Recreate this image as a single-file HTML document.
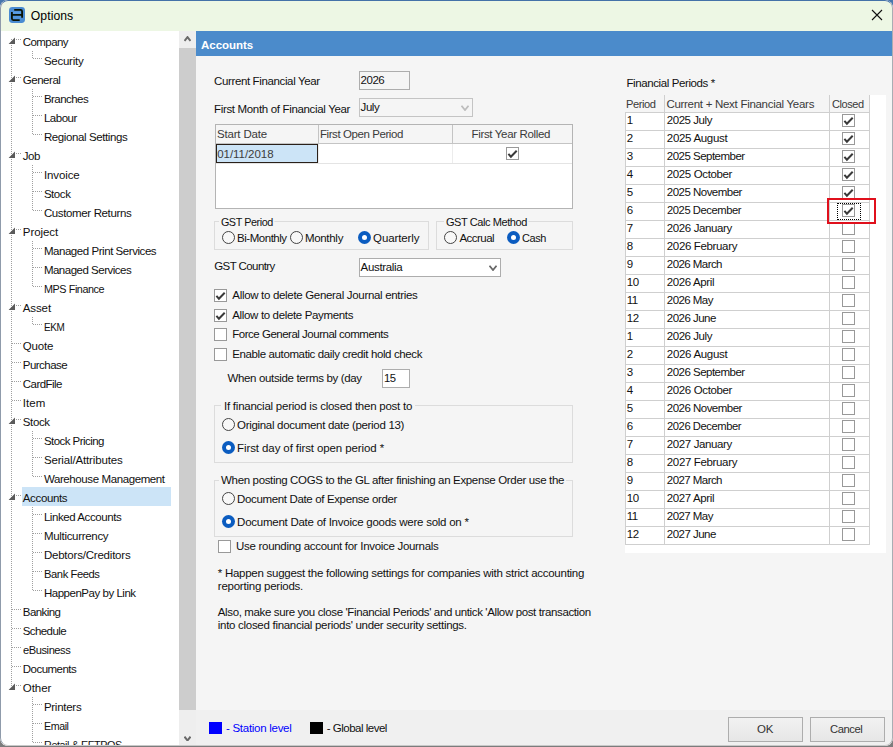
<!DOCTYPE html>
<html lang="en"><head><meta charset="utf-8"><title>Options</title>
<style>
html,body{margin:0;padding:0}
body{width:893px;height:747px;overflow:hidden;background:#7c7c7c;position:relative;font-family:"Liberation Sans", sans-serif;font-size:11.5px;color:#111}
.abs{position:absolute}
#win{position:absolute;left:0;top:0;width:893px;height:746px;border-radius:8px;overflow:hidden;background:#f5f5f5;}
#win:after{content:'';position:absolute;left:0;top:0;right:0;bottom:0;border-radius:8px;border:1px solid;border-color:#4472a8 #a9adb3 #c8c8c8 #8f9bab;pointer-events:none}
#corner{position:absolute;left:0;top:0;width:893px;height:20px;background:#4676ad}
#title{position:absolute;left:1px;top:1px;width:891px;height:30px;background:#edf7e4;border-radius:7px 7px 0 0}
#treebg{position:absolute;left:1px;top:31px;width:178px;height:714px;background:#fff}
#sb{position:absolute;left:179px;top:31px;width:17px;height:714px;background:#eee}
#thumb{position:absolute;left:0;top:17px;width:17px;height:662px;background:#cdcdcd}
#hdr{position:absolute;left:196px;top:31px;width:696px;height:25px;background:#4b8bcb}
#botbar{position:absolute;left:196px;top:710px;width:696px;height:35px;background:#f0f0f0}
.t{position:absolute;white-space:pre;line-height:14px;height:14px}
.vd{position:absolute;width:1px;background:repeating-linear-gradient(to bottom,#a0a0a0 0 1px,transparent 1px 2px)}
.hd{position:absolute;height:1px;background:repeating-linear-gradient(to right,#a0a0a0 0 1px,transparent 1px 2px)}
  .cb{position:absolute;width:11px;height:11px;border:1px solid #999;background:#fff}
.btn{position:absolute;width:73px;height:23px;border:1px solid #adadad;background:linear-gradient(#f2f2f2,#e6e6e6)}
</style></head><body>
<div id="corner"></div>
<div id="win">
<div id="title"></div>
<svg class="abs" style="left:9px;top:7px" width="16" height="16" viewBox="0 0 16 16"><rect width="16" height="16" rx="3.4" fill="#4a8cd2"/><rect x="4" y="4.6" width="8" height="2.2" fill="#5a9de2"/><rect x="4" y="9" width="8" height="2.8" fill="#5296dc"/><path d="M5.2 2.9H11.6Q13.1 2.9 13.1 4.4V10.7M2.9 7.9H12.6M2.9 5.1V11.6Q2.9 13.1 4.4 13.1H10.7" fill="none" stroke="#0a1405" stroke-width="1.8"/></svg><svg class="abs" style="left:871px;top:9px" width="12" height="12" viewBox="0 0 12 12"><path d="M1 1L11 11M11 1L1 11" stroke="#111" stroke-width="1.1" fill="none"/></svg>
<div id="treebg"></div>
<div id="sb"><div id="thumb"></div></div>
<div id="hdr"></div>
<div id="botbar"></div>
<div style="position:absolute;left:22px;top:487px;width:149px;height:19px;background:#cce4f7"></div><div class="vd" style="left:11px;top:39px;height:647px"></div><div class="hd" style="left:16px;top:39px;width:6px"></div><svg class="abs" style="left:8px;top:37px" width="8" height="8" viewBox="0 0 8 8"><path d="M7 0.6V7H0.6Z" fill="#5a5a5a"/></svg><div class="vd" style="left:32px;top:51px;height:8px"></div><div class="hd" style="left:33px;top:58px;width:9px"></div><div class="hd" style="left:16px;top:77px;width:6px"></div><svg class="abs" style="left:8px;top:75px" width="8" height="8" viewBox="0 0 8 8"><path d="M7 0.6V7H0.6Z" fill="#5a5a5a"/></svg><div class="vd" style="left:32px;top:89px;height:46px"></div><div class="hd" style="left:33px;top:96px;width:9px"></div><div class="hd" style="left:33px;top:115px;width:9px"></div><div class="hd" style="left:33px;top:134px;width:9px"></div><div class="hd" style="left:16px;top:153px;width:6px"></div><svg class="abs" style="left:8px;top:151px" width="8" height="8" viewBox="0 0 8 8"><path d="M7 0.6V7H0.6Z" fill="#5a5a5a"/></svg><div class="vd" style="left:32px;top:165px;height:46px"></div><div class="hd" style="left:33px;top:172px;width:9px"></div><div class="hd" style="left:33px;top:191px;width:9px"></div><div class="hd" style="left:33px;top:210px;width:9px"></div><div class="hd" style="left:16px;top:229px;width:6px"></div><svg class="abs" style="left:8px;top:227px" width="8" height="8" viewBox="0 0 8 8"><path d="M7 0.6V7H0.6Z" fill="#5a5a5a"/></svg><div class="vd" style="left:32px;top:241px;height:46px"></div><div class="hd" style="left:33px;top:248px;width:9px"></div><div class="hd" style="left:33px;top:267px;width:9px"></div><div class="hd" style="left:33px;top:286px;width:9px"></div><div class="hd" style="left:16px;top:305px;width:6px"></div><svg class="abs" style="left:8px;top:303px" width="8" height="8" viewBox="0 0 8 8"><path d="M7 0.6V7H0.6Z" fill="#5a5a5a"/></svg><div class="vd" style="left:32px;top:317px;height:8px"></div><div class="hd" style="left:33px;top:324px;width:9px"></div><div class="hd" style="left:12px;top:343px;width:10px"></div><div class="hd" style="left:12px;top:362px;width:10px"></div><div class="hd" style="left:12px;top:381px;width:10px"></div><div class="hd" style="left:12px;top:400px;width:10px"></div><div class="hd" style="left:16px;top:419px;width:6px"></div><svg class="abs" style="left:8px;top:417px" width="8" height="8" viewBox="0 0 8 8"><path d="M7 0.6V7H0.6Z" fill="#5a5a5a"/></svg><div class="vd" style="left:32px;top:431px;height:46px"></div><div class="hd" style="left:33px;top:438px;width:9px"></div><div class="hd" style="left:33px;top:457px;width:9px"></div><div class="hd" style="left:33px;top:476px;width:9px"></div><div class="hd" style="left:16px;top:495px;width:6px"></div><svg class="abs" style="left:8px;top:493px" width="8" height="8" viewBox="0 0 8 8"><path d="M7 0.6V7H0.6Z" fill="#5a5a5a"/></svg><div class="vd" style="left:32px;top:507px;height:84px"></div><div class="hd" style="left:33px;top:514px;width:9px"></div><div class="hd" style="left:33px;top:533px;width:9px"></div><div class="hd" style="left:33px;top:552px;width:9px"></div><div class="hd" style="left:33px;top:571px;width:9px"></div><div class="hd" style="left:33px;top:590px;width:9px"></div><div class="hd" style="left:12px;top:609px;width:10px"></div><div class="hd" style="left:12px;top:628px;width:10px"></div><div class="hd" style="left:12px;top:647px;width:10px"></div><div class="hd" style="left:12px;top:666px;width:10px"></div><div class="hd" style="left:16px;top:685px;width:6px"></div><svg class="abs" style="left:8px;top:683px" width="8" height="8" viewBox="0 0 8 8"><path d="M7 0.6V7H0.6Z" fill="#5a5a5a"/></svg><div class="vd" style="left:32px;top:697px;height:46px"></div><div class="hd" style="left:33px;top:704px;width:9px"></div><div class="hd" style="left:33px;top:723px;width:9px"></div><div class="hd" style="left:33px;top:742px;width:9px"></div>
<div class="abs" style="left:359px;top:71px;width:49px;height:17px;background:#f5f5f5;border:1px solid #adadad;"></div><div class="abs" style="left:359px;top:98px;width:112px;height:17px;background:#f5f5f5;border:1px solid #c4c4c4;"></div><svg class="abs" style="left:461px;top:105px" width="8" height="6" viewBox="0 0 8 6"><path d="M0.5 0.7L4.0 5L7.5 0.7" fill="none" stroke="#bdbdbd" stroke-width="1.8"/></svg><div class="abs" style="left:215px;top:124px;width:356px;height:83px;background:#fff;border:1px solid #b4b4b4;"></div><div class="abs" style="left:216px;top:125px;width:356px;height:18px;background:#f5f5f5;border-bottom:1px solid #c4c4c4"></div><div class="abs" style="left:318px;top:125px;width:1px;height:19px;background:#c4c4c4"></div><div class="abs" style="left:452px;top:125px;width:1px;height:19px;background:#c4c4c4"></div><div class="abs" style="left:216px;top:163px;width:356px;height:1px;background:#e4e4e4"></div><div class="abs" style="left:318px;top:144px;width:1px;height:19px;background:#ececec"></div><div class="abs" style="left:452px;top:144px;width:1px;height:19px;background:#ececec"></div><div class="abs" style="left:216px;top:144px;width:100px;height:17px;background:#cce4f7;border:1px solid #2a2019;"></div><div class="cb" style="left:506px;top:147px"><svg width="13" height="13" viewBox="0 0 13 13" style="position:absolute;left:-1px;top:-1px"><path d="M2.4 6.9L4.9 9.7L10.7 3.7" fill="none" stroke="#3a3a3a" stroke-width="2"/></svg></div><div class="abs" style="left:214px;top:221px;width:213px;height:27px;border:1px solid #dcdcdc;"></div><div class="abs" style="left:436px;top:221px;width:135px;height:27px;border:1px solid #dcdcdc;"></div><div class="abs" style="left:222px;top:231px;width:11px;height:11px;border-radius:50%;background:#f8f8f8;border:1px solid #444;"></div><div class="abs" style="left:290px;top:231px;width:11px;height:11px;border-radius:50%;background:#f8f8f8;border:1px solid #444;"></div><div class="abs" style="left:358px;top:231px;width:13px;height:13px;border-radius:50%;background:#0b5cc0;"><div style="position:absolute;left:4px;top:4px;width:5px;height:5px;border-radius:50%;background:#fff"></div></div><div class="abs" style="left:444px;top:231px;width:11px;height:11px;border-radius:50%;background:#f8f8f8;border:1px solid #444;"></div><div class="abs" style="left:507px;top:231px;width:13px;height:13px;border-radius:50%;background:#0b5cc0;"><div style="position:absolute;left:4px;top:4px;width:5px;height:5px;border-radius:50%;background:#fff"></div></div><div class="abs" style="left:359px;top:258px;width:140px;height:17px;background:#fff;border:1px solid #adadad;"></div><svg class="abs" style="left:488.5px;top:265px" width="8" height="6" viewBox="0 0 8 6"><path d="M0.5 0.7L4.0 5L7.5 0.7" fill="none" stroke="#686868" stroke-width="1.8"/></svg><div class="cb" style="left:214px;top:289px"><svg width="13" height="13" viewBox="0 0 13 13" style="position:absolute;left:-1px;top:-1px"><path d="M2.4 6.9L4.9 9.7L10.7 3.7" fill="none" stroke="#3a3a3a" stroke-width="2"/></svg></div><div class="cb" style="left:214px;top:309px"><svg width="13" height="13" viewBox="0 0 13 13" style="position:absolute;left:-1px;top:-1px"><path d="M2.4 6.9L4.9 9.7L10.7 3.7" fill="none" stroke="#3a3a3a" stroke-width="2"/></svg></div><div class="cb" style="left:214px;top:328px"></div><div class="cb" style="left:214px;top:348px"></div><div class="abs" style="left:382px;top:369px;width:26px;height:17px;background:#fff;border:1px solid #adadad;"></div><div class="abs" style="left:214px;top:405px;width:357px;height:56px;border:1px solid #dcdcdc;"></div><div class="abs" style="left:222px;top:418px;width:11px;height:11px;border-radius:50%;background:#f8f8f8;border:1px solid #444;"></div><div class="abs" style="left:222px;top:441px;width:13px;height:13px;border-radius:50%;background:#0b5cc0;"><div style="position:absolute;left:4px;top:4px;width:5px;height:5px;border-radius:50%;background:#fff"></div></div><div class="abs" style="left:214px;top:480px;width:357px;height:55px;border:1px solid #dcdcdc;"></div><div class="abs" style="left:222px;top:492px;width:11px;height:11px;border-radius:50%;background:#f8f8f8;border:1px solid #444;"></div><div class="abs" style="left:222px;top:515px;width:13px;height:13px;border-radius:50%;background:#0b5cc0;"><div style="position:absolute;left:4px;top:4px;width:5px;height:5px;border-radius:50%;background:#fff"></div></div><div class="cb" style="left:218px;top:540px"></div><div class="abs" style="left:209px;top:722px;width:13px;height:12px;background:#0000ff"></div><div class="abs" style="left:310px;top:722px;width:13px;height:12px;background:#000"></div><div class="btn" style="left:728px;top:717px"></div><div class="btn" style="left:810px;top:717px"></div><div class="abs" style="left:625px;top:95px;width:261px;height:458px;background:#fff"></div><div class="abs" style="left:625px;top:95px;width:245px;height:17px;background:#f5f5f5;"></div><div class="abs" style="left:625px;top:112px;width:245px;height:1px;background:#cfcfcf"></div><div class="abs" style="left:625px;top:130px;width:245px;height:1px;background:#cfcfcf"></div><div class="abs" style="left:625px;top:148px;width:245px;height:1px;background:#cfcfcf"></div><div class="abs" style="left:625px;top:166px;width:245px;height:1px;background:#cfcfcf"></div><div class="abs" style="left:625px;top:184px;width:245px;height:1px;background:#cfcfcf"></div><div class="abs" style="left:625px;top:202px;width:245px;height:1px;background:#cfcfcf"></div><div class="abs" style="left:625px;top:220px;width:245px;height:1px;background:#cfcfcf"></div><div class="abs" style="left:625px;top:238px;width:245px;height:1px;background:#cfcfcf"></div><div class="abs" style="left:625px;top:256px;width:245px;height:1px;background:#cfcfcf"></div><div class="abs" style="left:625px;top:274px;width:245px;height:1px;background:#cfcfcf"></div><div class="abs" style="left:625px;top:292px;width:245px;height:1px;background:#cfcfcf"></div><div class="abs" style="left:625px;top:310px;width:245px;height:1px;background:#cfcfcf"></div><div class="abs" style="left:625px;top:328px;width:245px;height:1px;background:#cfcfcf"></div><div class="abs" style="left:625px;top:346px;width:245px;height:1px;background:#cfcfcf"></div><div class="abs" style="left:625px;top:364px;width:245px;height:1px;background:#cfcfcf"></div><div class="abs" style="left:625px;top:382px;width:245px;height:1px;background:#cfcfcf"></div><div class="abs" style="left:625px;top:400px;width:245px;height:1px;background:#cfcfcf"></div><div class="abs" style="left:625px;top:418px;width:245px;height:1px;background:#cfcfcf"></div><div class="abs" style="left:625px;top:436px;width:245px;height:1px;background:#cfcfcf"></div><div class="abs" style="left:625px;top:454px;width:245px;height:1px;background:#cfcfcf"></div><div class="abs" style="left:625px;top:472px;width:245px;height:1px;background:#cfcfcf"></div><div class="abs" style="left:625px;top:490px;width:245px;height:1px;background:#cfcfcf"></div><div class="abs" style="left:625px;top:508px;width:245px;height:1px;background:#cfcfcf"></div><div class="abs" style="left:625px;top:526px;width:245px;height:1px;background:#cfcfcf"></div><div class="abs" style="left:625px;top:544px;width:245px;height:1px;background:#cfcfcf"></div><div class="abs" style="left:664px;top:95px;width:1px;height:450px;background:#cfcfcf"></div><div class="abs" style="left:829px;top:95px;width:1px;height:450px;background:#cfcfcf"></div><div class="abs" style="left:869px;top:95px;width:1px;height:450px;background:#cfcfcf"></div><div class="abs" style="left:625px;top:112px;width:1px;height:433px;background:#cfcfcf"></div><div class="cb" style="left:842px;top:114px"><svg width="13" height="13" viewBox="0 0 13 13" style="position:absolute;left:-1px;top:-1px"><path d="M2.4 6.9L4.9 9.7L10.7 3.7" fill="none" stroke="#3a3a3a" stroke-width="2"/></svg></div><div class="cb" style="left:842px;top:132px"><svg width="13" height="13" viewBox="0 0 13 13" style="position:absolute;left:-1px;top:-1px"><path d="M2.4 6.9L4.9 9.7L10.7 3.7" fill="none" stroke="#3a3a3a" stroke-width="2"/></svg></div><div class="cb" style="left:842px;top:150px"><svg width="13" height="13" viewBox="0 0 13 13" style="position:absolute;left:-1px;top:-1px"><path d="M2.4 6.9L4.9 9.7L10.7 3.7" fill="none" stroke="#3a3a3a" stroke-width="2"/></svg></div><div class="cb" style="left:842px;top:168px"><svg width="13" height="13" viewBox="0 0 13 13" style="position:absolute;left:-1px;top:-1px"><path d="M2.4 6.9L4.9 9.7L10.7 3.7" fill="none" stroke="#3a3a3a" stroke-width="2"/></svg></div><div class="cb" style="left:842px;top:186px"><svg width="13" height="13" viewBox="0 0 13 13" style="position:absolute;left:-1px;top:-1px"><path d="M2.4 6.9L4.9 9.7L10.7 3.7" fill="none" stroke="#3a3a3a" stroke-width="2"/></svg></div><div class="cb" style="left:842px;top:204px"><svg width="13" height="13" viewBox="0 0 13 13" style="position:absolute;left:-1px;top:-1px"><path d="M2.4 6.9L4.9 9.7L10.7 3.7" fill="none" stroke="#3a3a3a" stroke-width="2"/></svg></div><div class="cb" style="left:842px;top:222px"></div><div class="cb" style="left:842px;top:240px"></div><div class="cb" style="left:842px;top:258px"></div><div class="cb" style="left:842px;top:276px"></div><div class="cb" style="left:842px;top:294px"></div><div class="cb" style="left:842px;top:312px"></div><div class="cb" style="left:842px;top:330px"></div><div class="cb" style="left:842px;top:348px"></div><div class="cb" style="left:842px;top:366px"></div><div class="cb" style="left:842px;top:384px"></div><div class="cb" style="left:842px;top:402px"></div><div class="cb" style="left:842px;top:420px"></div><div class="cb" style="left:842px;top:438px"></div><div class="cb" style="left:842px;top:456px"></div><div class="cb" style="left:842px;top:474px"></div><div class="cb" style="left:842px;top:492px"></div><div class="cb" style="left:842px;top:510px"></div><div class="cb" style="left:842px;top:528px"></div><div class="abs" style="left:837px;top:203px;width:22px;height:15px;border:1px dotted #000"></div><div class="abs" style="left:827px;top:198px;width:45px;height:22px;border:2px solid #e0101c"></div>
<span class="t" style="left:22.8px;top:35.0px;letter-spacing:-0.57px;">Company</span><span class="t" style="left:43.9px;top:54.0px;letter-spacing:-0.25px;">Security</span><span class="t" style="left:22.8px;top:73.0px;letter-spacing:-0.47px;">General</span><span class="t" style="left:43.9px;top:92.0px;letter-spacing:-0.542px;">Branches</span><span class="t" style="left:43.9px;top:111.0px;letter-spacing:-0.482px;">Labour</span><span class="t" style="left:43.9px;top:130.0px;letter-spacing:-0.397px;">Regional Settings</span><span class="t" style="left:22.8px;top:149.0px;letter-spacing:-0.473px;">Job</span><span class="t" style="left:43.9px;top:168.0px;letter-spacing:-0.106px;">Invoice</span><span class="t" style="left:43.9px;top:187.0px;letter-spacing:-0.441px;">Stock</span><span class="t" style="left:43.9px;top:206.0px;letter-spacing:-0.367px;">Customer Returns</span><span class="t" style="left:22.8px;top:225.0px;letter-spacing:-0.066px;">Project</span><span class="t" style="left:43.9px;top:244.0px;letter-spacing:-0.447px;">Managed Print Services</span><span class="t" style="left:43.9px;top:263.0px;letter-spacing:-0.497px;">Managed Services</span><span class="t" style="left:43.9px;top:282.0px;letter-spacing:-0.45px;transform:scaleX(0.9391);transform-origin:0 50%;">MPS Finance</span><span class="t" style="left:22.8px;top:301.0px;letter-spacing:-0.116px;">Asset</span><span class="t" style="left:43.9px;top:320.0px;letter-spacing:-0.45px;transform:scaleX(0.8617);transform-origin:0 50%;">EKM</span><span class="t" style="left:22.8px;top:339.0px;letter-spacing:-0.182px;">Quote</span><span class="t" style="left:22.8px;top:358.0px;letter-spacing:-0.542px;">Purchase</span><span class="t" style="left:22.8px;top:377.0px;letter-spacing:-0.538px;">CardFile</span><span class="t" style="left:22.8px;top:396.0px;letter-spacing:0.075px;">Item</span><span class="t" style="left:22.8px;top:415.0px;letter-spacing:-0.366px;">Stock</span><span class="t" style="left:43.9px;top:434.0px;letter-spacing:-0.542px;">Stock Pricing</span><span class="t" style="left:43.9px;top:453.0px;letter-spacing:-0.149px;">Serial/Attributes</span><span class="t" style="left:43.9px;top:472.0px;letter-spacing:-0.4px;">Warehouse Management</span><span class="t" style="left:22.8px;top:491.0px;letter-spacing:-0.359px;">Accounts</span><span class="t" style="left:43.9px;top:510.0px;letter-spacing:-0.426px;">Linked Accounts</span><span class="t" style="left:43.9px;top:529.0px;letter-spacing:-0.308px;">Multicurrency</span><span class="t" style="left:43.9px;top:548.0px;letter-spacing:-0.208px;">Debtors/Creditors</span><span class="t" style="left:43.9px;top:567.0px;letter-spacing:-0.45px;transform:scaleX(0.9751);transform-origin:0 50%;">Bank Feeds</span><span class="t" style="left:43.9px;top:586.0px;letter-spacing:-0.471px;">HappenPay by Link</span><span class="t" style="left:22.8px;top:605.0px;letter-spacing:-0.577px;">Banking</span><span class="t" style="left:22.8px;top:624.0px;letter-spacing:-0.596px;">Schedule</span><span class="t" style="left:22.8px;top:643.0px;letter-spacing:-0.45px;transform:scaleX(0.9664);transform-origin:0 50%;">eBusiness</span><span class="t" style="left:22.8px;top:662.0px;letter-spacing:-0.534px;">Documents</span><span class="t" style="left:22.8px;top:681.0px;letter-spacing:-0.041px;">Other</span><span class="t" style="left:43.9px;top:700.0px;letter-spacing:-0.261px;">Printers</span><span class="t" style="left:43.9px;top:719.0px;letter-spacing:-0.45px;transform:scaleX(0.9271);transform-origin:0 50%;">Email</span><span class="t" style="left:43.9px;top:738.0px;letter-spacing:-0.45px;transform:scaleX(0.9391);transform-origin:0 50%;">Retail &amp; EFTPOS</span><span class="t" style="left:30.8px;top:8.5px;letter-spacing:0.064px;font-size:12.2px;color:#000;">Options</span><span class="t" style="left:201.1px;top:38.0px;letter-spacing:-0.044px;font-weight:bold;color:#fff;">Accounts</span><span class="t" style="left:214.0px;top:74.0px;letter-spacing:-0.367px;">Current Financial Year</span><span class="t" style="left:360.6px;top:73.0px;letter-spacing:-0.498px;">2026</span><span class="t" style="left:214.0px;top:102.0px;letter-spacing:-0.334px;">First Month of Financial Year</span><span class="t" style="left:360.6px;top:100.0px;letter-spacing:-0.451px;">July</span><span class="t" style="left:216.9px;top:127.0px;letter-spacing:-0.165px;color:#3a3a3a;">Start Date</span><span class="t" style="left:319.9px;top:127.0px;letter-spacing:-0.414px;color:#3a3a3a;">First Open Period</span><span class="t" style="left:471.6px;top:127.0px;letter-spacing:-0.348px;color:#3a3a3a;">First Year Rolled</span><span class="t" style="left:217.2px;top:147.0px;letter-spacing:-0.034px;color:#3c3c3c;">01/11/2018</span><span class="t" style="left:220.9px;top:215.0px;letter-spacing:-0.45px;background:#f5f5f5;padding:0 2px;margin-left:-2px;transform:scaleX(0.9386);transform-origin:0 50%;">GST Period</span><span class="t" style="left:237.1px;top:231.0px;letter-spacing:-0.481px;">Bi-Monthly</span><span class="t" style="left:304.9px;top:231.0px;letter-spacing:-0.297px;">Monthly</span><span class="t" style="left:373.1px;top:231.0px;letter-spacing:-0.125px;">Quarterly</span><span class="t" style="left:446.2px;top:215.0px;letter-spacing:-0.45px;background:#f5f5f5;padding:0 2px;margin-left:-2px;transform:scaleX(0.9589);transform-origin:0 50%;">GST Calc Method</span><span class="t" style="left:459.4px;top:231.0px;letter-spacing:-0.51px;">Accrual</span><span class="t" style="left:522.1px;top:231.0px;letter-spacing:-0.45px;transform:scaleX(0.9526);transform-origin:0 50%;">Cash</span><span class="t" style="left:214.2px;top:259.0px;letter-spacing:-0.571px;">GST Country</span><span class="t" style="left:360.6px;top:260.0px;letter-spacing:-0.344px;">Australia</span><span class="t" style="left:232.3px;top:288.0px;letter-spacing:-0.317px;">Allow to delete General Journal entries</span><span class="t" style="left:232.3px;top:308.0px;letter-spacing:-0.349px;">Allow to delete Payments</span><span class="t" style="left:232.3px;top:327.0px;letter-spacing:-0.492px;">Force General Journal comments</span><span class="t" style="left:232.3px;top:347.0px;letter-spacing:-0.387px;">Enable automatic daily credit hold check</span><span class="t" style="left:227.4px;top:371.0px;letter-spacing:-0.339px;">When outside terms by (day</span><span class="t" style="left:384.2px;top:371.0px;letter-spacing:-0.45px;transform:scaleX(0.98);transform-origin:0 50%;">15</span><span class="t" style="left:224.0px;top:399.0px;letter-spacing:-0.239px;background:#f5f5f5;padding:0 3px;margin-left:-3px;">If financial period is closed then post to</span><span class="t" style="left:237.1px;top:418.0px;letter-spacing:-0.316px;">Original document date (period 13)</span><span class="t" style="left:237.1px;top:441.0px;letter-spacing:-0.101px;">First day of first open period *</span><span class="t" style="left:221.1px;top:473.0px;letter-spacing:-0.346px;background:#f5f5f5;padding:0 2px;margin-left:-2px;">When posting COGS to the GL after finishing an Expense Order use the</span><span class="t" style="left:237.1px;top:492.0px;letter-spacing:-0.358px;">Document Date of Expense order</span><span class="t" style="left:237.1px;top:515.0px;letter-spacing:-0.253px;">Document Date of Invoice goods were sold on *</span><span class="t" style="left:236.1px;top:539.0px;letter-spacing:-0.302px;">Use rounding account for Invoice Journals</span><span class="t" style="left:217.8px;top:566.0px;letter-spacing:-0.269px;">* Happen suggest the following settings for companies with strict accounting</span><span class="t" style="left:217.8px;top:579.0px;letter-spacing:-0.235px;">reporting periods.</span><span class="t" style="left:217.8px;top:605.0px;letter-spacing:-0.373px;">Also, make sure you close 'Financial Periods' and untick 'Allow post transaction</span><span class="t" style="left:217.8px;top:618.0px;letter-spacing:-0.291px;">into closed financial periods' under security settings.</span><span class="t" style="left:226.0px;top:721.0px;letter-spacing:-0.278px;color:#0000ff;">- Station level</span><span class="t" style="left:326.8px;top:721.0px;letter-spacing:-0.502px;">- Global level</span><span class="t" style="left:757.1px;top:722.0px;letter-spacing:-0.325px;color:#333;">OK</span><span class="t" style="left:830.1px;top:722.0px;letter-spacing:-0.45px;color:#333;transform:scaleX(0.9773);transform-origin:0 50%;">Cancel</span><span class="t" style="left:626.4px;top:76.0px;letter-spacing:-0.394px;">Financial Periods *</span><span class="t" style="left:626.4px;top:97.0px;letter-spacing:-0.45px;color:#3a3a3a;transform:scaleX(0.9677);transform-origin:0 50%;">Period</span><span class="t" style="left:666.4px;top:97.0px;letter-spacing:-0.286px;color:#3a3a3a;">Current + Next Financial Years</span><span class="t" style="left:832.4px;top:97.0px;letter-spacing:-0.45px;color:#3a3a3a;transform:scaleX(0.9564);transform-origin:0 50%;">Closed</span><span class="t" style="left:626.7px;top:113.0px;letter-spacing:-0.429px;">1</span><span class="t" style="left:666.8px;top:113.0px;letter-spacing:-0.454px;">2025 July</span><span class="t" style="left:626.7px;top:131.0px;letter-spacing:-0.429px;">2</span><span class="t" style="left:666.8px;top:131.0px;letter-spacing:-0.305px;">2025 August</span><span class="t" style="left:626.7px;top:149.0px;letter-spacing:-0.429px;">3</span><span class="t" style="left:666.8px;top:149.0px;letter-spacing:-0.519px;">2025 September</span><span class="t" style="left:626.7px;top:167.0px;letter-spacing:-0.429px;">4</span><span class="t" style="left:666.8px;top:167.0px;letter-spacing:-0.372px;">2025 October</span><span class="t" style="left:626.7px;top:185.0px;letter-spacing:-0.429px;">5</span><span class="t" style="left:666.8px;top:185.0px;letter-spacing:-0.519px;">2025 November</span><span class="t" style="left:626.7px;top:203.0px;letter-spacing:-0.429px;">6</span><span class="t" style="left:666.8px;top:203.0px;letter-spacing:-0.45px;transform:scaleX(0.9748);transform-origin:0 50%;">2025 December</span><span class="t" style="left:626.7px;top:221.0px;letter-spacing:-0.429px;">7</span><span class="t" style="left:666.8px;top:221.0px;letter-spacing:-0.382px;">2026 January</span><span class="t" style="left:626.7px;top:239.0px;letter-spacing:-0.429px;">8</span><span class="t" style="left:666.8px;top:239.0px;letter-spacing:-0.35px;">2026 February</span><span class="t" style="left:626.7px;top:257.0px;letter-spacing:-0.429px;">9</span><span class="t" style="left:666.8px;top:257.0px;letter-spacing:-0.559px;">2026 March</span><span class="t" style="left:626.7px;top:275.0px;letter-spacing:-0.429px;">10</span><span class="t" style="left:666.8px;top:275.0px;letter-spacing:-0.384px;">2026 April</span><span class="t" style="left:626.7px;top:293.0px;letter-spacing:-0.429px;">11</span><span class="t" style="left:666.8px;top:293.0px;letter-spacing:-0.559px;">2026 May</span><span class="t" style="left:626.7px;top:311.0px;letter-spacing:-0.429px;">12</span><span class="t" style="left:666.8px;top:311.0px;letter-spacing:-0.527px;">2026 June</span><span class="t" style="left:626.7px;top:329.0px;letter-spacing:-0.429px;">1</span><span class="t" style="left:666.8px;top:329.0px;letter-spacing:-0.454px;">2026 July</span><span class="t" style="left:626.7px;top:347.0px;letter-spacing:-0.429px;">2</span><span class="t" style="left:666.8px;top:347.0px;letter-spacing:-0.305px;">2026 August</span><span class="t" style="left:626.7px;top:365.0px;letter-spacing:-0.429px;">3</span><span class="t" style="left:666.8px;top:365.0px;letter-spacing:-0.519px;">2026 September</span><span class="t" style="left:626.7px;top:383.0px;letter-spacing:-0.429px;">4</span><span class="t" style="left:666.8px;top:383.0px;letter-spacing:-0.372px;">2026 October</span><span class="t" style="left:626.7px;top:401.0px;letter-spacing:-0.429px;">5</span><span class="t" style="left:666.8px;top:401.0px;letter-spacing:-0.519px;">2026 November</span><span class="t" style="left:626.7px;top:419.0px;letter-spacing:-0.429px;">6</span><span class="t" style="left:666.8px;top:419.0px;letter-spacing:-0.45px;transform:scaleX(0.9748);transform-origin:0 50%;">2026 December</span><span class="t" style="left:626.7px;top:437.0px;letter-spacing:-0.429px;">7</span><span class="t" style="left:666.8px;top:437.0px;letter-spacing:-0.382px;">2027 January</span><span class="t" style="left:626.7px;top:455.0px;letter-spacing:-0.429px;">8</span><span class="t" style="left:666.8px;top:455.0px;letter-spacing:-0.35px;">2027 February</span><span class="t" style="left:626.7px;top:473.0px;letter-spacing:-0.429px;">9</span><span class="t" style="left:666.8px;top:473.0px;letter-spacing:-0.559px;">2027 March</span><span class="t" style="left:626.7px;top:491.0px;letter-spacing:-0.429px;">10</span><span class="t" style="left:666.8px;top:491.0px;letter-spacing:-0.384px;">2027 April</span><span class="t" style="left:626.7px;top:509.0px;letter-spacing:-0.429px;">11</span><span class="t" style="left:666.8px;top:509.0px;letter-spacing:-0.559px;">2027 May</span><span class="t" style="left:626.7px;top:527.0px;letter-spacing:-0.429px;">12</span><span class="t" style="left:666.8px;top:527.0px;letter-spacing:-0.527px;">2027 June</span>
<svg class="abs" style="left:184px;top:36px" width="7" height="5.5" viewBox="0 0 7 5.5"><path d="M0.5 4.9L3.5 1.1L6.5 4.9" fill="none" stroke="#6a6a6a" stroke-width="2"/></svg><svg class="abs" style="left:184px;top:735.5px" width="7" height="5.5" viewBox="0 0 7 5.5"><path d="M0.5 0.7L3.5 4.5L6.5 0.7" fill="none" stroke="#6a6a6a" stroke-width="2"/></svg>
</div>
</body></html>
